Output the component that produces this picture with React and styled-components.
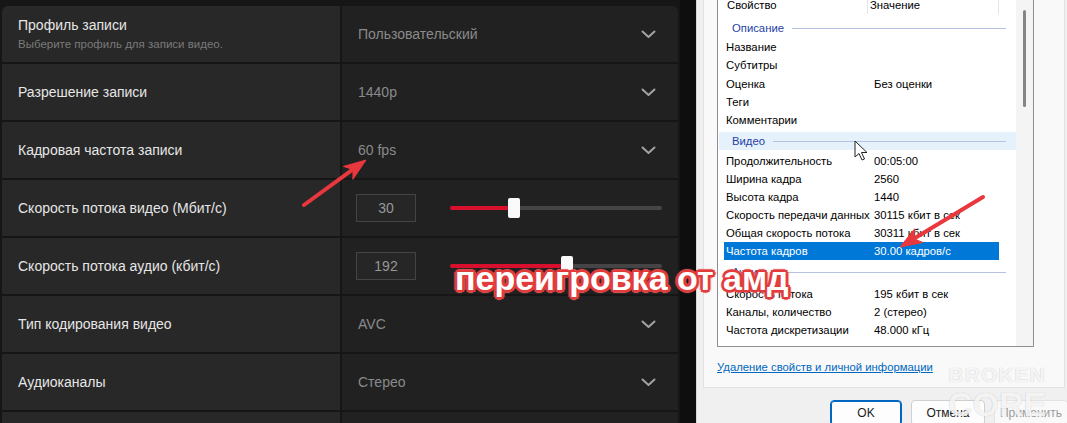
import React from "react";
import styled, { createGlobalStyle } from "styled-components";

const GlobalStyle = createGlobalStyle`
  html, body {
    margin: 0;
    padding: 0;
    background: #161616;
    overflow: hidden;
  }
  * {
    box-sizing: border-box;
  }
`;

const Page = styled.div`
  position: relative;
  display: flex;
  width: 1067px;
  height: 423px;
  overflow: hidden;
`;

/* ---------- AMD panel ---------- */

const AmdPanel = styled.div`
  width: 680px;
  flex-shrink: 0;
  background: #161616;
  padding: 6px 2px 0;
  font-family: "Liberation Sans", Arial, sans-serif;
`;

const SettingsList = styled.div`
  display: flex;
  flex-direction: column;
  gap: 2px;
  border-radius: 6px 6px 0 0;
  overflow: hidden;
`;

const SettingRow = styled.div`
  display: grid;
  grid-template-columns: 338px 1fr;
  gap: 2px;
  height: 56px;
  flex-shrink: 0;
`;

const LabelCell = styled.div`
  background: #282828;
  display: flex;
  flex-direction: column;
  justify-content: center;
  gap: 3px;
  padding-left: 16px;
`;

const LabelTitle = styled.div`
  font-size: 14px;
  line-height: 18px;
  color: #e6e6e6;
`;

const LabelHint = styled.div`
  font-size: 11.5px;
  line-height: 15px;
  color: #7a7a7a;
`;

const ValueCell = styled.div`
  background: #212121;
  display: flex;
  align-items: center;
  justify-content: ${(p) => (p.$slider ? "flex-start" : "space-between")};
  padding: 0 22px 0 ${(p) => (p.$slider ? "14px" : "16px")};
`;

const ValueText = styled.span`
  font-size: 14px;
  line-height: 18px;
  color: #8a8a8a;
`;

const NumberBox = styled.div`
  width: 60px;
  height: 28px;
  border: 1px solid #444;
  background: #262626;
  display: flex;
  align-items: center;
  justify-content: center;
  font-size: 14px;
  color: #979797;
`;

const Track = styled.div`
  position: relative;
  margin-left: 34px;
  width: 212px;
  height: 4px;
  border-radius: 2px;
  background: linear-gradient(
    to right,
    #d8102e 0 ${(p) => p.$pct}%,
    #454545 ${(p) => p.$pct}% 100%
  );
`;

const Thumb = styled.div`
  position: absolute;
  top: -8px;
  left: calc(${(p) => p.$pct}% - 6px);
  width: 12px;
  height: 20px;
  border-radius: 2px;
  background: #fafafa;
`;

const Chevron = () => (
  <svg width="15" height="9" viewBox="0 0 15 9">
    <polyline
      points="1.5,1.5 7.5,7 13.5,1.5"
      fill="none"
      stroke="#a3a3a3"
      strokeWidth="2"
      strokeLinecap="round"
      strokeLinejoin="round"
    />
  </svg>
);

const Strip = styled.div`
  width: 16px;
  flex-shrink: 0;
  background: #0e0e0e;
`;

/* ---------- Windows dialog ---------- */

const Dialog = styled.div`
  flex: 1;
  background: #f0f0f0;
  border-left: 1px solid #d6d6d6;
  display: flex;
  flex-direction: column;
  font: 11.3px "Liberation Sans", Arial, sans-serif;
  color: #000;
`;

const TabPanel = styled.div`
  margin-left: 6px;
  margin-right: 3px;
  background: #f9f9f9;
  border: 1px solid #e2e2e2;
  border-top: none;
  padding: 0 0 12px 13px;
  display: flex;
  flex-direction: column;
`;

const ListBox = styled.div`
  margin-top: -4px;
  width: 317px;
  height: 351px;
  background: #fff;
  border: 1px solid #8f8f8f;
  border-top: none;
  display: flex;
  overflow: hidden;
`;

const ListContent = styled.div`
  flex: 1;
  overflow: hidden;
  padding-left: 1px;
`;

const ScrollBar = styled.div`
  width: 17px;
  background: #f4f4f4;
  display: flex;
  justify-content: center;
  padding-top: 14px;
`;

const ScrollThumb = styled.div`
  width: 3px;
  height: 97px;
  border-radius: 2px;
  background: #858585;
`;

const HeaderRow = styled.div`
  display: flex;
  height: 18px;
  align-items: center;
  margin-left: 6px;
`;

const HeaderCell = styled.div`
  width: ${(p) => p.$w}px;
  height: 100%;
  padding-left: 2px;
  display: flex;
  align-items: center;
  border-right: 1px solid #e5e5e5;
`;

const GroupRow = styled.div`
  display: flex;
  align-items: center;
  height: ${(p) => p.$h || 20}px;
  margin-top: ${(p) => p.$mt || 0}px;
  padding: 0 10px 0 13px;
  background: ${(p) => (p.$hover ? "#e5f1fb" : "transparent")};
  color: #1f3fa6;
`;

const GroupLine = styled.div`
  flex: 1;
  height: 1px;
  margin-left: 8px;
  background: #b5c3e0;
`;

const PropRow = styled.div`
  display: flex;
  align-items: center;
  height: ${(p) => p.$h || 18}px;
  margin-left: 5px;
  margin-top: ${(p) => p.$mt || 0}px;
  width: 275px;
  background: ${(p) => (p.$selected ? "#0078d7" : "transparent")};
  color: ${(p) => (p.$selected ? "#fff" : "#000")};
  white-space: nowrap;
`;

const PropName = styled.span`
  width: 150px;
  flex-shrink: 0;
  padding-left: 2px;
`;

const DialogLink = styled.a`
  margin-top: 12px;
  line-height: 16px;
  color: #0067c0;
  text-decoration: underline;
`;

const ButtonRow = styled.div`
  display: flex;
  gap: 9px;
  margin-top: 12px;
  padding-left: 133px;
`;

const Button = styled.div`
  flex-shrink: 0;
  width: ${(p) => p.$w}px;
  height: 26px;
  border-radius: 4px;
  display: flex;
  align-items: center;
  justify-content: center;
  font-size: 12px;
  background: ${(p) => (p.$disabled ? "#f9f9f9" : "#fdfdfd")};
  border: 1px solid
    ${(p) => (p.$primary ? "#0067c0" : p.$disabled ? "#e3e3e3" : "#d0d0d0")};
  box-shadow: ${(p) => (p.$primary ? "inset 0 0 0 1px #0067c0" : "none")};
  color: ${(p) => (p.$disabled ? "#9d9d9d" : "#1b1b1b")};
`;

/* ---------- overlays ---------- */

const Caption = styled.div`
  position: absolute;
  left: 455px;
  top: 261px;
  font: bold 34px/34px "Liberation Sans", Arial, sans-serif;
  color: #fff;
  white-space: nowrap;
  text-shadow: 2px 0 0 #e23b3b, -2px 0 0 #e23b3b, 0 2px 0 #e23b3b,
    0 -2px 0 #e23b3b, 2px 2px 0 #e23b3b, -2px -2px 0 #e23b3b,
    2px -2px 0 #e23b3b, -2px 2px 0 #e23b3b, 3px 0 1px #e8585a,
    -3px 0 1px #e8585a, 0 3px 1px #e8585a, 0 -3px 1px #e8585a;
`;

const Watermark = styled.div`
  position: absolute;
  left: 948px;
  top: 364px;
  display: flex;
  flex-direction: column;
  align-items: center;
  font-family: "Liberation Sans", Arial, sans-serif;
  font-weight: bold;
  color: rgba(255, 255, 255, 0.85);
  text-shadow: 0 0 1px rgba(0, 0, 0, 0.25);
  line-height: 1;
  pointer-events: none;
`;

const WatermarkTop = styled.span`
  font-size: 21px;
  letter-spacing: 1px;
`;

const WatermarkBottom = styled.span`
  font-size: 34px;
  margin-top: 2px;
`;

const OverlaySvg = styled.svg`
  position: absolute;
  left: 0;
  top: 0;
  pointer-events: none;
`;

const settings = [
  {
    label: "Профиль записи",
    hint: "Выберите профиль для записи видео.",
    value: "Пользовательский",
  },
  { label: "Разрешение записи", value: "1440p" },
  { label: "Кадровая частота записи", value: "60 fps" },
  { label: "Скорость потока видео (Мбит/с)", num: "30", pct: 30 },
  { label: "Скорость потока аудио (кбит/с)", num: "192", pct: 55 },
  { label: "Тип кодирования видео", value: "AVC" },
  { label: "Аудиоканалы", value: "Стерео" },
  { label: "", value: "" },
];

const descriptionRows = [
  ["Название", ""],
  ["Субтитры", ""],
  ["Оценка", "Без оценки"],
  ["Теги", ""],
  ["Комментарии", ""],
];

const videoRows = [
  ["Продолжительность", "00:05:00"],
  ["Ширина кадра", "2560"],
  ["Высота кадра", "1440"],
  ["Скорость передачи данных", "30115 кбит в сек"],
  ["Общая скорость потока", "30311 кбит в сек"],
  ["Частота кадров", "30.00 кадров/с", true],
];

const audioRows = [
  ["Скорость потока", "195 кбит в сек"],
  ["Каналы, количество", "2 (стерео)"],
  ["Частота дискретизации", "48.000 кГц"],
];

const Arrow = ({ x1, y1, x2, y2 }) => {
  const dx = x2 - x1;
  const dy = y2 - y1;
  const len = Math.hypot(dx, dy);
  const ux = dx / len;
  const uy = dy / len;
  const nx = -uy;
  const ny = ux;
  const bx = x2 - ux * 22;
  const by = y2 - uy * 22;
  const head = [
    [x2, y2],
    [bx + nx * 8, by + ny * 8],
    [x2 - ux * 16, y2 - uy * 16],
    [bx - nx * 8, by - ny * 8],
  ]
    .map((p) => p.join(","))
    .join(" ");
  return (
    <g fill="#e8383d" stroke="#e8383d">
      <line
        x1={x1}
        y1={y1}
        x2={x2 - ux * 17}
        y2={y2 - uy * 17}
        strokeWidth="4"
        strokeLinecap="round"
      />
      <polygon points={head} strokeWidth="1" strokeLinejoin="round" />
    </g>
  );
};

export default function App() {
  return (
    <>
      <GlobalStyle />
      <Page>
        <AmdPanel>
          <SettingsList>
            {settings.map((s, i) => (
              <SettingRow key={i}>
                <LabelCell>
                  <LabelTitle>{s.label}</LabelTitle>
                  {s.hint && <LabelHint>{s.hint}</LabelHint>}
                </LabelCell>
                {s.num ? (
                  <ValueCell $slider>
                    <NumberBox>{s.num}</NumberBox>
                    <Track $pct={s.pct}>
                      <Thumb $pct={s.pct} />
                    </Track>
                  </ValueCell>
                ) : (
                  <ValueCell>
                    <ValueText>{s.value}</ValueText>
                    {s.label && <Chevron />}
                  </ValueCell>
                )}
              </SettingRow>
            ))}
          </SettingsList>
        </AmdPanel>
        <Strip />
        <Dialog>
          <TabPanel>
            <ListBox>
              <ListContent>
                <HeaderRow>
                  <HeaderCell $w={143}>Свойство</HeaderCell>
                  <HeaderCell $w={131}>Значение</HeaderCell>
                </HeaderRow>
                <GroupRow $mt={4}>
                  Описание
                  <GroupLine />
                </GroupRow>
                {descriptionRows.map(([n, v]) => (
                  <PropRow key={n} $h={18.25}>
                    <PropName>{n}</PropName>
                    {v}
                  </PropRow>
                ))}
                <GroupRow $mt={3} $h={18} $hover>
                  Видео
                  <GroupLine />
                </GroupRow>
                {videoRows.map(([n, v, sel], i) => (
                  <PropRow key={n} $selected={sel} $mt={i === 0 ? 2 : 0}>
                    <PropName>{n}</PropName>
                    {v}
                  </PropRow>
                ))}
                <GroupRow $mt={2}>
                  Аудио
                  <GroupLine />
                </GroupRow>
                {audioRows.map(([n, v], i) => (
                  <PropRow key={n} $mt={i === 0 ? 3 : 0}>
                    <PropName>{n}</PropName>
                    {v}
                  </PropRow>
                ))}
              </ListContent>
              <ScrollBar>
                <ScrollThumb />
              </ScrollBar>
            </ListBox>
            <DialogLink>Удаление свойств и личной информации</DialogLink>
          </TabPanel>
          <ButtonRow>
            <Button $w={72} $primary>
              OK
            </Button>
            <Button $w={74}>Отмена</Button>
            <Button $w={74} $disabled>
              Применить
            </Button>
          </ButtonRow>
        </Dialog>

        <OverlaySvg width="1067" height="423" viewBox="0 0 1067 423">
          <Arrow x1={304} y1={205} x2={366} y2={160} />
          <Arrow x1={983} y1={197} x2={900} y2={247} />
          <path
            d="M855 141 L855 157 L859 153.5 L862 160 L864.5 159 L861.5 152.5 L867 152.5 Z"
            fill="#fff"
            stroke="#222"
            strokeWidth="1"
            strokeLinejoin="round"
          />
        </OverlaySvg>
        <Caption>переигровка от амд</Caption>
        <Watermark>
          <WatermarkTop>BROKEN</WatermarkTop>
          <WatermarkBottom>CORE</WatermarkBottom>
        </Watermark>
      </Page>
    </>
  );
}
